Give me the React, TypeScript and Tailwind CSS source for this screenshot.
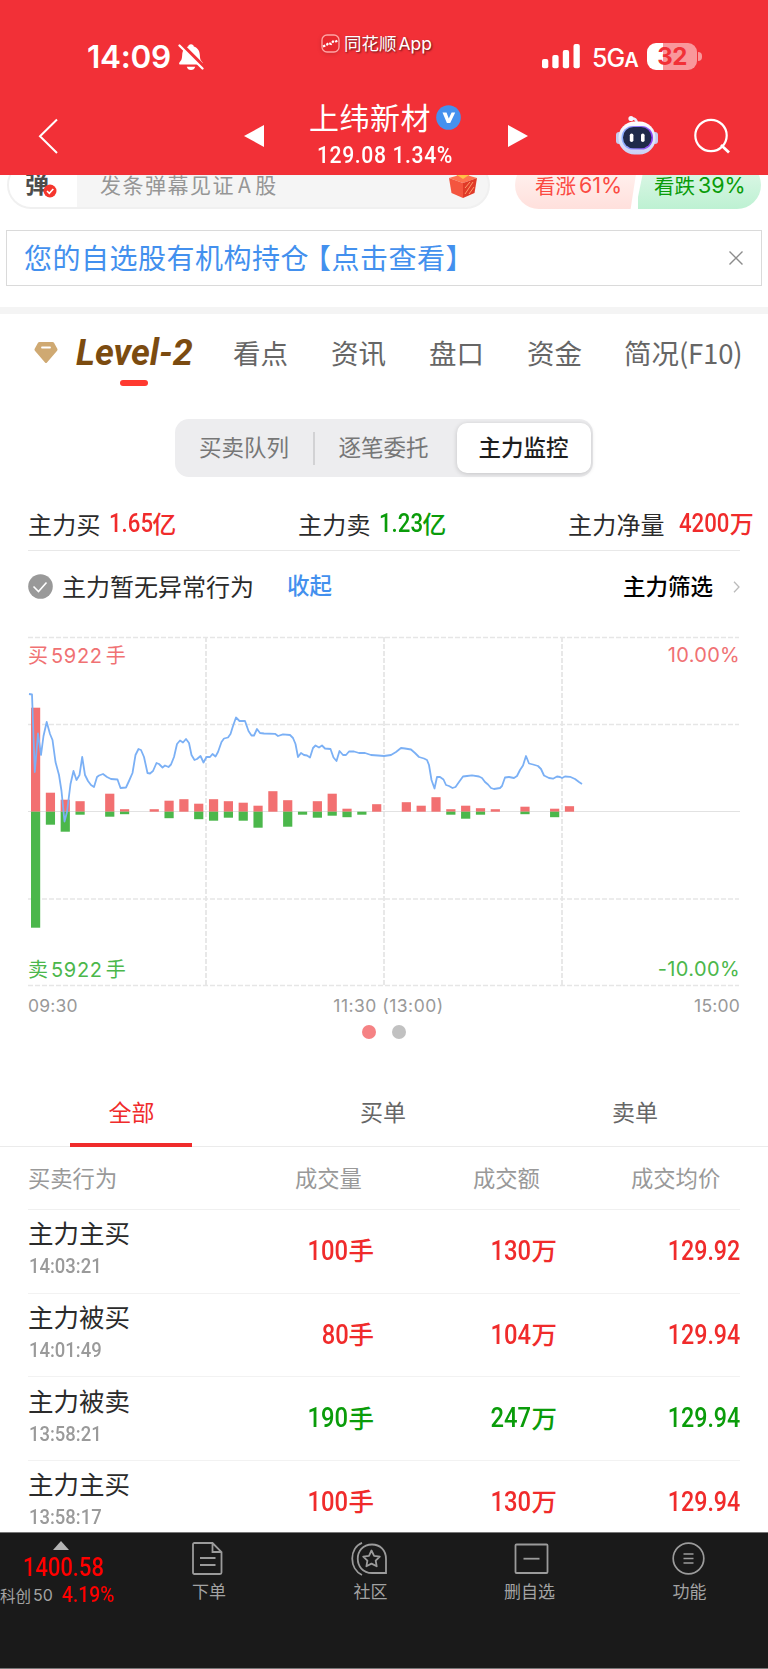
import clsx from 'clsx';

interface Bar {
  slot: number;
  buy: number;
  sell: number;
}

interface Trade {
  action: string;
  time: string;
  volume: string;
  amount: string;
  price: string;
  side: 'up' | 'down';
}

const bars: Bar[] = [
  { slot: 0, buy: 104, sell: 116 },
  { slot: 1, buy: 19, sell: 13 },
  { slot: 2, buy: 12, sell: 20 },
  { slot: 3, buy: 10.5, sell: 3 },
  { slot: 5, buy: 18, sell: 5 },
  { slot: 6, buy: 2.5, sell: 2.5 },
  { slot: 8, buy: 2.5, sell: 0 },
  { slot: 9, buy: 11, sell: 6.5 },
  { slot: 10, buy: 12.5, sell: 0 },
  { slot: 11, buy: 8, sell: 7.5 },
  { slot: 12, buy: 12.5, sell: 9 },
  { slot: 13, buy: 10.5, sell: 6 },
  { slot: 14, buy: 9, sell: 9 },
  { slot: 15, buy: 6, sell: 16 },
  { slot: 16, buy: 20.5, sell: 0 },
  { slot: 17, buy: 11.5, sell: 15 },
  { slot: 18, buy: 0, sell: 3 },
  { slot: 19, buy: 10.5, sell: 6 },
  { slot: 20, buy: 18, sell: 4 },
  { slot: 21, buy: 3, sell: 5.5 },
  { slot: 22, buy: 0, sell: 3 },
  { slot: 23, buy: 7.5, sell: 0 },
  { slot: 25, buy: 9.5, sell: 0 },
  { slot: 26, buy: 6, sell: 0 },
  { slot: 27, buy: 14.5, sell: 0 },
  { slot: 28, buy: 2.5, sell: 3 },
  { slot: 29, buy: 6, sell: 7 },
  { slot: 30, buy: 3.5, sell: 3 },
  { slot: 31, buy: 2.5, sell: 0 },
  { slot: 33, buy: 5, sell: 2.5 },
  { slot: 35, buy: 3, sell: 5.5 },
  { slot: 36, buy: 5.5, sell: 0 },
];

const priceLine =
  '29,694 32,694.5 34.8,772 38,733.5 41,755 43.5,736 46.7,722 50,734 52.5,740 55.5,762 59,775 61.5,791 64.5,821.5 67,812 70.5,784 73.5,771 76.5,780 79.5,775 82.2,757 85,775 88,781 91,785 94,787 97,777 99,775.5 103,774 107,777 111,779 117.5,779.5 120.5,788 126,787.5 129,781 132.5,773 135.5,755 138.5,749 141,750 144,757 147.5,773 150,773.5 153,771 156.5,763 159,764 162.5,767.5 165,765.5 168.5,767 171,764.5 174,757 177,744 180,740.5 183,742.5 186,739 189,743 191.5,755 194.5,760 197,759 200.5,756 203.5,762.5 206.5,757 210,757 212.5,754 215.5,756.5 218,752 221.5,742 224,738.5 228,737.5 230.5,734 233,726 236,717.5 239.5,721 245,721 248.5,731 251.5,735.5 254,735.5 257,729 260,733 264,733.5 275,733.8 278,736 283,734.3 290,735 293,738 295.5,744 298,757 301,753 304,755 307,755.5 310,757.5 313,748 315.5,745.5 319,747.5 322,745.5 325,748.5 330.5,749 333.5,757.5 336.5,761 339.5,751 343,755 346,755 349,751.5 354,751.5 359,753 365,753 371,755 378,755.5 384,756 391,755 396,752 401,748 405,748.5 411,749.5 415,753 419,757 424,758.5 427,760 429,765 431.5,780 434.5,788.5 437,777 440,777 443.5,779.5 446,785 449,786 452.5,788 455.5,787 459,782 463,776.5 467,776 472,775.3 479,776.5 482,778 485,782 488,784.5 491,788 494,789 500,788 502,786 505,777.5 509,777 514,778 517,776 520,770 523,765.5 526,756 529,763.5 533,764.5 538,766 541,769 544,775.5 549,778 553,778.7 557,776.5 560,777 562,778 565,776.5 570,776.8 575,779 579,782 582,784';

const trades: Trade[] = [
  { action: '主力主买', time: '14:03:21', volume: '100', amount: '130', price: '129.92', side: 'up' },
  { action: '主力被买', time: '14:01:49', volume: '80', amount: '104', price: '129.94', side: 'up' },
  { action: '主力被卖', time: '13:58:21', volume: '190', amount: '247', price: '129.94', side: 'down' },
  { action: '主力主买', time: '13:58:17', volume: '100', amount: '130', price: '129.94', side: 'up' },
];

function StatusBar() {
  return (
    <div className="flex h-[92px] items-start text-white">
      <span className="ml-[87px] mt-[38px] w-[91px] whitespace-nowrap font-['Inter'] text-[31.5px] font-semibold leading-[38px] tracking-[-0.3px]">
        14:09
      </span>
      <svg className="mt-[43px] h-7 w-[26px]" viewBox="0 0 26 28">
        <path
          d="M13 1.2c1.7 0 2.6 1 2.8 2.2 4 1.2 5.8 4.4 6 8.4 .2 4.4 .8 5.6 2.6 7.4 .9 1 .6 2.4 -.9 2.4H2.5c-1.5 0-1.8-1.4-.9-2.4 1.8-1.8 2.4-3 2.6-7.4 .2-4 2-7.2 6-8.4C10.4 2.2 11.3 1.2 13 1.2z"
          fill="#fff"
        />
        <path d="M8.8 23.7h8.4c-.5 2-2 3.3-4.2 3.3s-3.7-1.3-4.2-3.3z" fill="#fff" />
        <path d="M2.8 1.2 25.5 23.9" stroke="#f23037" strokeWidth="4.5" />
        <path d="M1.5 2.5 24.5 25.5" stroke="#fff" strokeWidth="2.3" strokeLinecap="round" />
      </svg>
      <div className="ml-[117px] mt-[33px] flex h-5 items-center">
        <svg className="h-[19px] w-[19px] drop-shadow-sm" viewBox="0 0 19 19">
          <rect x="1" y="1" width="17" height="17" rx="5" fill="#e8282f" stroke="#ffa5a5" strokeWidth="1.3" />
          <path
            d="m2 12.500 3.500-1.500 2-2 2.500 1 2-2.500 2 .500 2.500-1.500"
            stroke="#fff"
            strokeWidth="2.2"
            fill="none"
            strokeDasharray="2.5 1.2"
          />
        </svg>
        <span className="ml-[4px] w-[110px] whitespace-nowrap text-[17.5px] leading-5 [text-shadow:1px_1px_2px_rgba(0,0,0,0.6)]">
          同花顺<span className="ml-[2px] font-['Inter'] text-[17.5px]">App</span>
        </span>
      </div>
      <svg className="ml-[88px] mt-[43px] h-[26px] w-[39px]" viewBox="0 0 39 26" fill="#fff">
        <rect x="0" y="16" width="6.3" height="9.3" rx="2" />
        <rect x="10.3" y="12" width="6.3" height="13.3" rx="2" />
        <rect x="20.8" y="7" width="6.3" height="18.3" rx="2" />
        <rect x="31.5" y="1" width="6.3" height="24.3" rx="2" />
      </svg>
      <span className="ml-[11px] mt-[43px] w-[55px] whitespace-nowrap font-['Inter'] text-[25px] font-medium leading-[30px] tracking-[-1px]">
        5G<span className="text-[20px] font-semibold">A</span>
      </span>
      <div className="mt-[43px] flex items-center">
        <div className="flex h-[27px] w-[50px] items-center justify-center rounded-[9px] bg-[linear-gradient(90deg,#fff_16px,#f9979b_16px)] font-['Inter'] text-[24px] font-bold leading-none tracking-[-0.5px] text-[#f23037]">
          32
        </div>
        <div className="ml-[1px] h-[9px] w-[4px] rounded-r-full bg-[#f9979b]" />
      </div>
    </div>
  );
}

function RobotIcon() {
  return (
    <svg className="h-[42px] w-[44px]" viewBox="0 0 44 42">
      <defs>
        <linearGradient id="shell" x1="0" y1="0" x2="0" y2="1">
          <stop offset="0" stopColor="#fff" />
          <stop offset="1" stopColor="#c9d0f5" />
        </linearGradient>
        <linearGradient id="rim" x1="0" y1="0" x2="1" y2="0">
          <stop offset="0" stopColor="#8fb6ff" />
          <stop offset="1" stopColor="#8c3df0" />
        </linearGradient>
      </defs>
      <path d="M16.5 3.5q5-.5 5.5 5" stroke="#e9ecff" strokeWidth="2.5" fill="none" />
      <circle cx="16" cy="3.5" r="2.6" fill="#f4f5ff" />
      <rect x="1" y="17" width="6" height="12" rx="3" fill="#c5ccf0" />
      <rect x="37" y="17" width="6" height="12" rx="3" fill="#c5ccf0" />
      <rect x="3.5" y="6.5" width="37" height="33" rx="16" fill="url(#shell)" />
      <rect x="6.5" y="11" width="31.5" height="23.5" rx="11.5" fill="url(#rim)" />
      <rect x="8" y="12" width="28.5" height="21.3" rx="10.5" fill="#1f2a4a" />
      <rect x="14.8" y="18.5" width="3.6" height="8.5" rx="1.8" fill="#fff" />
      <rect x="26" y="18.5" width="3.6" height="8.5" rx="1.8" fill="#fff" />
    </svg>
  );
}

function TitleBar() {
  return (
    <div className="flex h-[83px] items-start text-white">
      <svg className="ml-[38px] mt-[26px] h-9 w-5" viewBox="0 0 20 36" fill="none" stroke="#fff" strokeWidth="2">
        <path d="M19 1.5 2 18.2 19 35" />
      </svg>
      <svg className="ml-[186px] mt-[32px] h-6 w-5" viewBox="0 0 20 24" fill="#fff">
        <path d="M0 12 20 1v22z" />
      </svg>
      <div className="ml-[45px] flex w-[154px] flex-col">
        <div className="mt-[6px] flex h-[36px] items-center">
          <span className="w-[127px] whitespace-nowrap text-[30px] leading-[36px] tracking-[0.5px]">上纬新材</span>
          <svg className="mt-[3px] h-[25px] w-[25px] shrink-0" viewBox="0 0 25 25">
            <circle cx="12.5" cy="12.5" r="12.3" fill="#4691ee" />
            <path d="M6.5 7.5h4l2.3 6 2.8-6h3.6l-5 10.5h-3.3z" fill="#fff" />
          </svg>
        </div>
        <div className="ml-[8px] mt-[7px] whitespace-nowrap">
          <span className="inline-block origin-left scale-x-[0.88] font-['Roboto'] text-[24px] font-medium leading-[28px] tracking-[0.7px]">
            129.08 1.34%
          </span>
        </div>
      </div>
      <svg className="ml-[45px] mt-[32px] h-6 w-5" viewBox="0 0 20 24" fill="#fff">
        <path d="M20 12 0 1v22z" />
      </svg>
      <div className="ml-[87px] mt-[23px]">
        <RobotIcon />
      </div>
      <svg className="ml-[35px] mt-[26px] h-9 w-9" viewBox="0 0 36 36" fill="none" stroke="#fff" strokeWidth="2.2">
        <circle cx="17" cy="17.5" r="15.7" />
        <path d="m27 27 8 7.5" strokeWidth="2.8" />
      </svg>
    </div>
  );
}

function GiftIcon() {
  return (
    <svg className="h-[28px] w-[30px]" viewBox="0 0 30 28">
      <path d="M7 2q4-4 8 1 4-5 8-1l-3 4H10z" fill="#f7a823" />
      <path d="M1 7 15 3l14 4-14 5z" fill="#ff7350" />
      <path d="M1 7l14 5v15L3.5 22z" fill="#f4553f" />
      <path d="M29 7l-14 5v15l11.5-5z" fill="#e03a28" />
      <path d="m17 23 8-12M17 17l5-6M21 23l5-7" stroke="#ff9a6a" strokeWidth="1" />
      <path d="M9 4h12l-6 4z" fill="#ffc247" />
    </svg>
  );
}

function BarrageRow() {
  return (
    <div className="flex h-[34px] items-end overflow-hidden">
      <div className="ml-[7px] flex h-[48px] w-[483px] shrink-0 items-center overflow-hidden rounded-full border-2 border-[#f0f0f0] bg-[#f5f5f5]">
        <div className="relative flex h-full w-[68px] items-center bg-white pb-[5px] pl-[16px] text-[24px] font-bold text-[#4d4d4d]">
          弹
          <svg className="absolute left-[34px] top-[21px] h-[14px] w-[14px]" viewBox="0 0 14 14">
            <circle cx="7" cy="7" r="6.5" fill="#f5362d" />
            <path d="m4 7 2.3 2.3L10.3 5" stroke="#fff" strokeWidth="1.6" fill="none" />
          </svg>
        </div>
        <span className="ml-[23px] w-[348px] whitespace-nowrap pb-[1px] text-[21px] tracking-[1.5px] text-[#969696]">
          发条弹幕见证<span className="mx-[3px]">A</span>股
        </span>
        <GiftIcon />
      </div>
      <div className="ml-[25px] flex h-[48px] w-[123px] shrink-0 items-center rounded-l-full bg-linear-to-b from-[#fff5f3] to-[#ffe0dc] pl-[20px] text-[20.5px] text-[#fb4a42] [clip-path:polygon(0_0,100%_0,94%_100%,0_100%)]">
        看涨<span className="ml-[3px] font-['Inter'] text-[21.5px]">61%</span>
      </div>
      <div className="flex h-[48px] w-[123px] shrink-0 items-center rounded-r-full bg-linear-to-b from-[#e2f8ea] to-[#bdf1d2] pl-[16px] text-[20.5px] text-[#0a9c0a] [clip-path:polygon(6%_0,100%_0,100%_100%,-2%_100%)]">
        看跌<span className="ml-[3px] font-['Inter'] text-[21.5px]">39%</span>
      </div>
    </div>
  );
}

function Notice() {
  return (
    <div className="mx-[6px] mt-[21px] flex h-[56px] items-center justify-between border border-[#dadada] pl-[17px] pr-[18px]">
      <span className="-mt-[2px] whitespace-nowrap text-[28px] leading-[52px] tracking-[0.5px] text-[#4390ee]">
        您的自选股有机构持仓
        <span className="ml-[8px] [font-feature-settings:'halt']">【</span>
        点击查看】
      </span>
      <svg className="h-[14px] w-[14px]" viewBox="0 0 14 14" stroke="#8c8c8c" strokeWidth="1.4">
        <path d="M.5 .5l13 13M13.5 .5l-13 13" />
      </svg>
    </div>
  );
}

function MainTabs() {
  return (
    <div className="flex h-[105px] items-start pt-[18px] text-[27.5px] leading-[40px] text-[#666]">
      <svg className="ml-[34px] mt-[10px] h-[22px] w-[24px]" viewBox="0 0 24 22">
        <path d="M5.5 0h13q1 0 1.5.8l3.3 6q.6 1.2-.2 2L13 20.5q-1 1-2 0L.9 8.8q-.8-.8-.2-2l3.3-6Q4.500 0 5.5 0z" fill="#cfa972" />
        <path d="M8 5.5h8" stroke="#fff" strokeWidth="1.8" strokeLinecap="round" />
      </svg>
      <div className="ml-[18px] flex w-[157px] flex-col">
        <span className="mt-[1px] origin-left whitespace-nowrap font-['Roboto'] text-[36px] font-bold italic text-[#7b4b10]">
          Level-2
        </span>
        <span className="ml-[44px] mt-[7px] h-[6px] w-[28px] rounded-full bg-[#ff3a30]" />
      </div>
      <span className="w-[98px]">看点</span>
      <span className="w-[98px]">资讯</span>
      <span className="w-[98px]">盘口</span>
      <span className="w-[97px]">资金</span>
      <span className="whitespace-nowrap">
        简况<span className="tracking-[-0.2px]">(F10)</span>
      </span>
    </div>
  );
}

function SegmentedControl() {
  return (
    <div className="mx-auto flex h-[58px] w-[418px] items-center rounded-[14px] bg-[#ededef] text-[22.5px] text-[#777]">
      <span className="w-[138px] pb-[2px] pl-[24px]">买卖队列</span>
      <span className="h-[33px] w-[1.5px] bg-[#d2d2d4]" />
      <span className="w-[142px] pb-[2px] pl-[24px]">逐笔委托</span>
      <span className="flex h-[50px] w-[134px] items-center justify-center rounded-[10px] bg-white pb-[2px] font-medium text-[#1e1e1e] shadow-[0_1px_5px_rgba(0,0,0,0.18)]">
        主力监控
      </span>
    </div>
  );
}

interface StatProps {
  label: string;
  value: string;
  unit: string;
  up?: boolean;
  wide?: boolean;
}

function Stat({ label, value, unit, up, wide }: StatProps) {
  return (
    <div className="flex items-center whitespace-nowrap">
      <span className="-mt-[1px] text-[24px] leading-[30px] tracking-[0.2px] text-[#2b2b2b]">{label}</span>
      <span
        className={clsx(
          '-mt-[3px] flex items-center text-[24px] font-medium leading-[30px]',
          wide ? 'ml-[14px]' : 'ml-[8px]',
          up ? 'text-[#f02b2b]' : 'text-[#0a9c0a]',
        )}
      >
        <span className="-mr-[7px] mt-[1px] origin-left scale-x-[0.87] font-['Roboto'] text-[25.5px]">{value}</span>
        {unit}
      </span>
    </div>
  );
}

function Summary() {
  return (
    <>
      <div className="mt-[30px] flex h-[34px] items-center pl-[28px]">
        <div className="w-[270px]">
          <Stat label="主力买" value="1.65" unit="亿" up />
        </div>
        <div className="w-[270px]">
          <Stat label="主力卖" value="1.23" unit="亿" />
        </div>
        <Stat label="主力净量" value="4200" unit="万" up wide />
      </div>
      <div className="mx-[28px] mt-[9px] flex h-[72px] items-center border-t border-[#e8e8e8]">
        <svg className="h-[25px] w-[25px]" viewBox="0 0 25 25">
          <circle cx="12.5" cy="12.5" r="12.3" fill="#999" />
          <path d="m5.5 12.5 5 5L18.5 8.5" stroke="#fff" strokeWidth="1.6" fill="none" />
        </svg>
        <span className="-mt-[2px] ml-[9px] w-[225px] text-[24px] text-[#2b2b2b]">主力暂无异常行为</span>
        <span className="-mt-[3px] text-[22.5px] font-medium text-[#4390ee]">收起</span>
        <span className="-mt-[2px] ml-auto text-[22.5px] font-medium text-black">主力筛选</span>
        <svg className="ml-[20px] h-3 w-[7px]" viewBox="0 0 7 12" fill="none" stroke="#bbb" strokeWidth="1.3">
          <path d="m1 .8 5 5.2-5 5.2" />
        </svg>
      </div>
    </>
  );
}

function Chart() {
  return (
    <div className="relative mt-[8px] h-[370px]">
      <svg className="block h-[370px] w-full" viewBox="0 630 768 370">
        <g stroke="#e6e6e6" strokeWidth="1.4" strokeDasharray="5 2">
          {[637.5, 724.5, 899, 985.5].map((y) => (
            <path key={y} d={`M28 ${y}H739`} />
          ))}
          {[206, 384, 562].map((x) => (
            <path key={x} d={`M${x} 637V985`} strokeWidth="1.8" />
          ))}
        </g>
        <path d="M28 811.5H740" stroke="#e2e2e2" />
        {bars.map(({ slot, buy, sell }) => (
          <g key={slot}>
            <rect x={31 + slot * 14.83} y={811.7 - buy} width="9.2" height={buy} fill="#f27071" />
            <rect x={31 + slot * 14.83} y={811.7} width="9.2" height={sell} fill="#4bb74b" />
          </g>
        ))}
        <polyline points={priceLine} fill="none" stroke="#7bb0f5" strokeWidth="1.8" strokeLinejoin="round" />
      </svg>
      <div className="absolute inset-x-[28px] top-[11px] flex h-7 items-center justify-between text-[20px] text-[#f07173]">
        <span>
          买<span className="mx-[3px] font-['Inter'] tracking-[0.7px]">5922</span>手
        </span>
        <span className="font-['Inter'] tracking-[0.3px]">10.00%</span>
      </div>
      <div className="absolute inset-x-[28px] top-[325px] flex h-7 items-center justify-between text-[20px] text-[#4bb74b]">
        <span>
          卖<span className="mx-[3px] font-['Inter'] tracking-[0.7px]">5922</span>手
        </span>
        <span className="font-['Inter'] tracking-[0.4px]">-10.00%</span>
      </div>
    </div>
  );
}

function ChartFooter() {
  return (
    <>
      <div className="flex h-[13px] items-center justify-between px-[28px] font-['Inter'] text-[17.5px] text-[#999]">
        <span className="tracking-[0.2px]">09:30</span>
        <span className="ml-[5px] tracking-[0.5px]">11:30 (13:00)</span>
        <span className="tracking-[0.2px]">15:00</span>
      </div>
      <div className="mt-[12px] flex justify-center gap-[16px]">
        <span className="h-[14px] w-[14px] rounded-full bg-[#f58284]" />
        <span className="h-[14px] w-[14px] rounded-full bg-[#c1c1c1]" />
      </div>
    </>
  );
}

function OrderTabs() {
  return (
    <div className="mt-[33px] flex h-[75px] items-start border-b border-[#ebebeb] pl-[6px] text-[23px] leading-[78px] text-[#666]">
      <div className="flex w-[251px] flex-col items-center text-[#f02b2b]">
        <span className="h-[71px]">全部</span>
        <span className="mr-[2px] h-[4px] w-[122px] bg-[#f02b2b]" />
      </div>
      <span className="w-[252px] text-center">买单</span>
      <span className="w-[252px] text-center">卖单</span>
    </div>
  );
}

function TradeRow({ trade }: { trade: Trade }) {
  return (
    <div className="mx-[28px] flex h-[83.7px] items-center border-b border-[#f2f2f2]">
      <div className="flex w-[180px] flex-col pb-[4px]">
        <span className="text-[25.5px] leading-[32px] text-[#2b2b2b]">{trade.action}</span>
        <span className="ml-[1px] mt-[2px] origin-left scale-x-[0.9] font-['Roboto'] text-[20.5px] font-medium leading-[32px] text-[#9a9a9a]">
          {trade.time}
        </span>
      </div>
      <div
        className={clsx(
          'flex h-full flex-1 items-center text-[25.5px] font-medium',
          trade.side === 'up' ? 'text-[#f02b2b]' : 'text-[#0a9c0a]',
        )}
      >
        <div className="flex w-[166px] items-center justify-end">
          <span className="origin-right scale-x-[0.88] font-['Roboto'] text-[27px]">{trade.volume}</span>
          <span className="-mt-[4px]">手</span>
        </div>
        <div className="flex w-[183px] items-center justify-end">
          <span className="origin-right scale-x-[0.88] font-['Roboto'] text-[27px]">{trade.amount}</span>
          <span className="-mt-[4px]">万</span>
        </div>
        <div className="flex flex-1 justify-end">
          <span className="origin-right scale-x-[0.86] font-['Roboto'] text-[27px]">{trade.price}</span>
        </div>
      </div>
    </div>
  );
}

function TradeTable() {
  return (
    <div className="h-[385px] overflow-hidden">
      <div className="mx-[28px] flex h-[63px] items-center border-b border-[#f0f0f0] text-[22.3px] text-[#999]">
        <span className="w-[267px]">买卖行为</span>
        <span className="w-[178px]">成交量</span>
        <span className="w-[158px]">成交额</span>
        <span className="whitespace-nowrap">成交均价</span>
      </div>
      {trades.map((trade) => (
        <TradeRow key={trade.time} trade={trade} />
      ))}
    </div>
  );
}

function BottomBar() {
  return (
    <div className="flex h-[137px] items-start border-y border-[#777] bg-[#1a1a1a] text-[17px] leading-[22px] text-[#a3a3a3]">
      <div className="flex w-[129px] flex-col">
        <svg className="ml-[53px] mt-[8px] h-[9px] w-4" viewBox="0 0 16 9" fill="#b5b5b5">
          <path d="M8 0l8 9H0z" />
        </svg>
        <span className="ml-[23px] mt-[4px] origin-left scale-x-[0.86] whitespace-nowrap font-['Roboto'] text-[25.5px] font-medium leading-[27px] text-[#f00]">
          1400.58
        </span>
        <span className="mt-[2px] flex items-center whitespace-nowrap text-[15.5px] leading-[24px]">
          科创<span className="ml-[2px] w-[29px] font-['Inter'] text-[16px]">50</span>
          <span className="origin-left scale-x-[0.9] font-['Roboto'] text-[21.5px] font-medium text-[#f00]">4.19%</span>
        </span>
      </div>
      <div className="flex w-[160px] flex-col items-center">
        <svg className="mr-[4px] mt-[9px] h-[33px] w-[31px]" viewBox="0 0 31 33" fill="none" stroke="#9b9b9b" strokeWidth="1.8">
          <path d="M1 2.5Q1 1 2.5 1H20.5L29.5 10V30.5Q29.5 32 28 32H2.5Q1 32 1 30.5zM20.5 1V10H29.5M8 16h15.5M8 23h15.5" />
        </svg>
        <span className="mt-[5px]">下单</span>
      </div>
      <div className="flex w-[163px] flex-col items-center">
        <svg className="mr-[2px] mt-[9px] h-[34px] w-[37px]" viewBox="0 0 37 34" fill="none" stroke="#9b9b9b" strokeWidth="1.8">
          <path d="M11 .8C-2 6-2 27 11 33" />
          <path d="M21 2.5c-19 0-19 28.5 0 28.5H35V17C35 8 29 2.5 21 2.5z" />
          <path d="m20.5 8.5 2.6 5.3 5.7.8-4.1 4 1 5.7-5.2-2.7-5.1 2.7 1-5.7-4.2-4 5.8-.8z" strokeLinejoin="round" />
        </svg>
        <span className="mt-[4px]">社区</span>
      </div>
      <div className="flex w-[155px] flex-col items-center">
        <svg className="ml-[3px] mt-[10px] h-[32px] w-[35px]" viewBox="0 0 35 32" fill="none" stroke="#9b9b9b" strokeWidth="1.8">
          <rect x="1.5" y="1.5" width="32" height="28.5" rx="1" />
          <path d="M9.5 15.7h16" />
        </svg>
        <span className="mt-[5px]">删自选</span>
      </div>
      <div className="flex w-[161px] flex-col items-center pl-[4px]">
        <svg className="mr-[2px] mt-[9px] h-[33px] w-[33px]" viewBox="0 0 33 33" fill="none" stroke="#9b9b9b" strokeWidth="1.7">
          <circle cx="16.5" cy="16.5" r="15.3" />
          <path d="M11.5 12h10M11.5 16.5h10M11.5 21h10" />
        </svg>
        <span className="mt-[5px]">功能</span>
      </div>
    </div>
  );
}

export default function App() {
  return (
    <div className="w-[768px] overflow-hidden bg-white font-['Noto_Sans_CJK_SC',sans-serif]">
      <header className="bg-[#f23037]">
        <StatusBar />
        <TitleBar />
      </header>
      <BarrageRow />
      <Notice />
      <div className="mt-[21px] h-[7px] bg-[#f4f4f4]" />
      <MainTabs />
      <SegmentedControl />
      <Summary />
      <Chart />
      <ChartFooter />
      <OrderTabs />
      <TradeTable />
      <BottomBar />
    </div>
  );
}
